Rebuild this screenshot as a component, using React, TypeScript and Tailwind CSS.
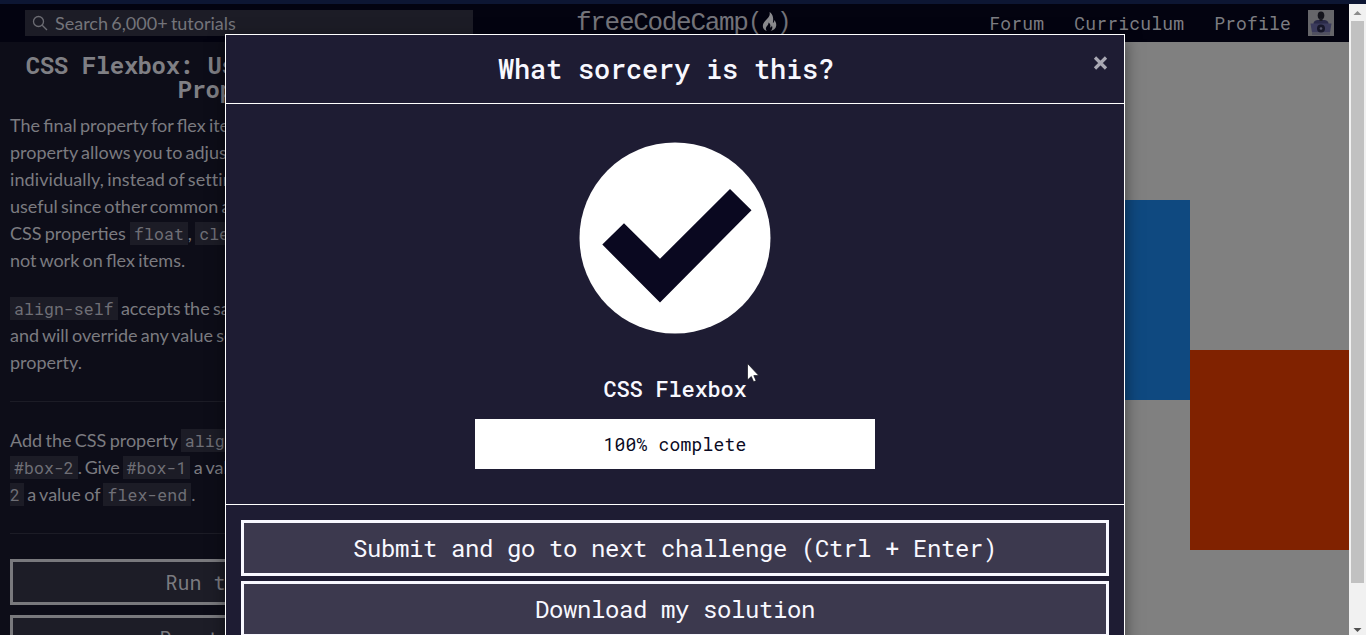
import type { ReactNode } from 'react';

const MONO = "font-['Roboto_Mono','DejaVu_Sans_Mono','Liberation_Mono',monospace]";

function Code({ children }: { children: ReactNode }) {
  return (
    <code className={`${MONO} bg-[#1c1c26] px-1 py-[1px] text-[16.5px] tracking-[0.07px] text-[#6f6f76]`}>
      {children}
    </code>
  );
}

function Flame() {
  return (
    <svg className="h-[19px] w-[15px]" viewBox="0 0 15 19" fill="currentColor">
      <path d="M7.600 0c.6 3-.4 4.600-2.400 6.800C3 9.200.8 11.300.8 14c0 2.500 1.600 4.200 4 5-1.300-1.600-1.200-3.600.4-5.200 1-1 1.400-2 1.300-3.200 2 1.200 2.200 3 1.600 4.800 1.200-.2 1.600-.8 1.700-1.900 1.200 2.200.4 4.200-1.300 5.500 3-.6 5.300-2.400 5.700-5.200.3-2.200-.5-4-2-5.700.1 1.700-.2 2.700-1.300 2.900C11.600 6.800 11.400 2.600 7.600 0Z" />
    </svg>
  );
}

function Avatar() {
  return (
    <svg className="h-[26px] w-[26px] shrink-0" viewBox="0 0 26 26">
      <rect width="26" height="26" fill="#66666a" />
      <path d="M5.500 14c0-3 2-4 5-4h5c3 0 5 1 5 4z" fill="#2a2a48" />
      <ellipse cx="13" cy="5.500" rx="3.300" ry="4" fill="#14141c" />
      <path d="M11.500 8h3v3h-3z" fill="#1a1a24" />
      <path d="M2.500 13.500h21l-1.500 9H4z" fill="#3b3b5c" />
      <circle cx="13" cy="18.500" r="4" fill="#161628" />
      <circle cx="13" cy="18.500" r="1.300" fill="#56566c" />
      <path d="M4 23.500h18v1H4z" fill="#3d3d56" />
    </svg>
  );
}

function Navbar() {
  return (
    <nav className="flex h-[38px] items-start bg-[#030310] text-[#7d7d82]">
      <div className="ml-[25px] mt-[6px] flex h-[26px] w-[448px] items-center bg-[#1c1c26]">
        <svg className="ml-[7px] h-4 w-4" viewBox="0 0 16 16" fill="none" stroke="#6c6c73" strokeWidth="1.300">
          <circle cx="6.500" cy="6.500" r="5" />
          <path d="m10.200 10.200 4.800 4.800" />
        </svg>
        <span className="ml-[7px] text-[18px] leading-[26px] text-[#74747a] [word-spacing:-1.300px]">
          Search 6,000+ tutorials
        </span>
      </div>
      <div className="ml-[103px] mt-[2px] flex h-[31px] items-center font-['Liberation_Mono',monospace] text-[26px] leading-[31px] text-[#74747a]">
        <span className="w-[172px] pt-[4px] tracking-[-1.300px]">freeCodeCamp</span>
        <span className="w-[14px] pt-[2px] text-[24px]">(</span>
        <span className="w-[15px] text-[#8b8b8f]">
          <Flame />
        </span>
        <span className="pt-[2px] text-[24px]">)</span>
      </div>
      <div className={`${MONO} ml-auto mr-[15px] mt-[6px] flex h-[26px] items-center text-[18px] tracking-[0.180px]`}>
        <a>Forum</a>
        <a className="ml-[30px]">Curriculum</a>
        <a className="ml-[30px] mr-[17px]">Profile</a>
        <Avatar />
      </div>
    </nav>
  );
}

function Lesson() {
  return (
    <section className="w-[484px] shrink-0 bg-[#0d0d18] pl-[10px] pr-[7px] text-[18px] leading-[27px] text-[#7b7b80]">
      <h1 className={`${MONO} pr-[2px] pt-[11px] text-center text-[24px] font-bold leading-6 tracking-[-0.420px] text-[#7f7f84]`}>
        CSS Flexbox: Use the align-self
        <br />
        <span className="mr-[18px]">Property</span>
      </h1>
      <div className="mt-[11px] whitespace-nowrap [word-spacing:-1.400px]">
        <p>
          The final property for flex items is align-self. This
          <br />
          property allows you to adjust each item's
          <br />
          <span className="tracking-[0.100px]">individually, instead of setting them all at once</span>
          <br />
          useful since other common adjustment
          <br />
          CSS properties{' '}
          <span className="ml-[1px]">
            <Code>float</Code>
          </span>
          , <Code>clear</Code>
          <br />
          not work on flex items.
        </p>
        <p className="mt-[21px]">
          <Code>align-self</Code> accepts the same values
          <br />
          and will override any value set by the
          <br />
          property.
        </p>
      </div>
      <hr className="mt-[25px] border-[#1c1c26]" />
      <p className="mt-[25px] whitespace-nowrap [word-spacing:-1.300px]">
        Add the CSS property <Code>align-self</Code>
        <br />
        <Code>#box-2</Code>
        <span className="tracking-[-0.300px]">. Give </span>
        <Code>#box-1</Code> a value of
        <br />
        <code className={`${MONO} bg-[#1c1c26] py-[1px] pr-1 text-[16.5px] text-[#6f6f76]`}>2</code> a value of{' '}
        <Code>flex-end</Code>.
      </p>
      <hr className="mt-[25px] border-[#1c1c26]" />
      <div className={`${MONO} mt-[25px] flex flex-col gap-[10px] text-[20px]`}>
        <button className="h-[46px] border-[3px] border-[#79797d] bg-[#1d1d27]">Run the Tests</button>
        <button className="h-[46px] border-[3px] border-[#79797d] bg-[#1d1d27]">Reset All Code</button>
      </div>
    </section>
  );
}

function Preview() {
  return (
    <section className="flex flex-1 overflow-hidden bg-[#808080] pl-[8px] pt-[8px]">
      <div className="flex h-[500px] w-[500px] shrink-0">
        <div className="h-[200px] w-[200px] shrink-0 self-center bg-[#0f4980]" />
        <div className="h-[200px] w-[200px] shrink-0 self-end bg-[#802200]" />
      </div>
    </section>
  );
}

function Scrollbar() {
  return (
    <div className="flex w-[17px] shrink-0 flex-col items-center bg-[#f1f1f1]">
      <svg className="h-[17px] w-[17px]" viewBox="0 0 17 17">
        <path d="M4.500 11h8l-4-4z" fill="#8b8b8b" />
      </svg>
      <div className="h-[562px] w-[13px] bg-[#c1c1c1]" />
      <svg className="mt-auto h-[14px] w-[17px]" viewBox="0 0 17 14">
        <path d="M4.500 7h8l-4 4z" fill="#505050" />
      </svg>
    </div>
  );
}

function CompletionModal() {
  return (
    <div className="absolute left-[225px] top-[34px] flex h-[700px] w-[900px] flex-col border border-white bg-[#1e1c33] text-[#f8f8ff] shadow-[0_5px_15px_rgba(0,0,0,0.5)]">
      <header className={`${MONO} flex h-[69px] shrink-0 items-center border-b border-white`}>
        <h2 className="ml-[272px] text-[27px] font-medium tracking-[-0.200px]">What sorcery is this?</h2>
        <button className="mb-[13px] ml-auto mr-[15px]" aria-label="Close">
          <svg className="h-4 w-4" viewBox="0 0 16 16" stroke="#a9a8b3" strokeWidth="3.200">
            <path d="m2 2.500 11 11M13 2.500l-11 11" />
          </svg>
        </button>
      </header>
      <div className="flex h-[401px] shrink-0 flex-col items-center border-b border-white">
        <svg className="mt-[38px] h-[192px] w-[192px] shrink-0" viewBox="0 0 192 192">
          <circle cx="96" cy="96" r="95.500" fill="#fff" />
          <path d="m23.300 102.600 21.700-21.400 36 35.600 70-69.800 21.500 21.300L81 160.400z" fill="#0a0820" />
        </svg>
        <div className={`${MONO} mt-[41px] text-[22px] font-medium leading-[28px] tracking-[-0.200px]`}>CSS Flexbox</div>
        <div className={`${MONO} mt-[16px] flex h-[50px] w-[400px] items-center justify-center bg-white text-[18px] tracking-[0.180px] text-[#0a0a23]`}>
          100% complete
        </div>
      </div>
      <footer className={`${MONO} flex flex-col gap-[5px] px-[15px] pt-[15px] text-[24px] tracking-[-0.400px]`}>
        <button className="h-[56px] border-[3px] border-[#f8f8ff] bg-[#3c394e]">
          Submit and go to next challenge (Ctrl + Enter)
        </button>
        <button className="h-[56px] border-[3px] border-[#f8f8ff] bg-[#3c394e]">Download my solution</button>
      </footer>
    </div>
  );
}

export default function App() {
  return (
    <div className="relative flex h-[635px] w-[1366px] flex-col overflow-hidden bg-[#0d0d18] font-['Lato',sans-serif]">
      <div className="h-1 shrink-0 bg-[#0d1633]" />
      <div className="flex min-h-0 flex-1">
        <div className="flex min-w-0 flex-1 flex-col">
          <Navbar />
          <main className="flex min-h-0 flex-1 overflow-hidden">
            <Lesson />
            <div className="w-[498px] shrink-0 bg-[#0d0d18]" />
            <Preview />
          </main>
        </div>
        <Scrollbar />
      </div>
      <CompletionModal />
      <svg className="absolute left-[746px] top-[362px] h-[22px] w-[14px]" viewBox="0 0 14 22">
        <path d="M1.500 1.500v16.500l3.800-3.500 2.300 5.300 2.500-1.100-2.300-5.100h5z" fill="#fff" stroke="#11111d" strokeWidth=".7" />
      </svg>
    </div>
  );
}
